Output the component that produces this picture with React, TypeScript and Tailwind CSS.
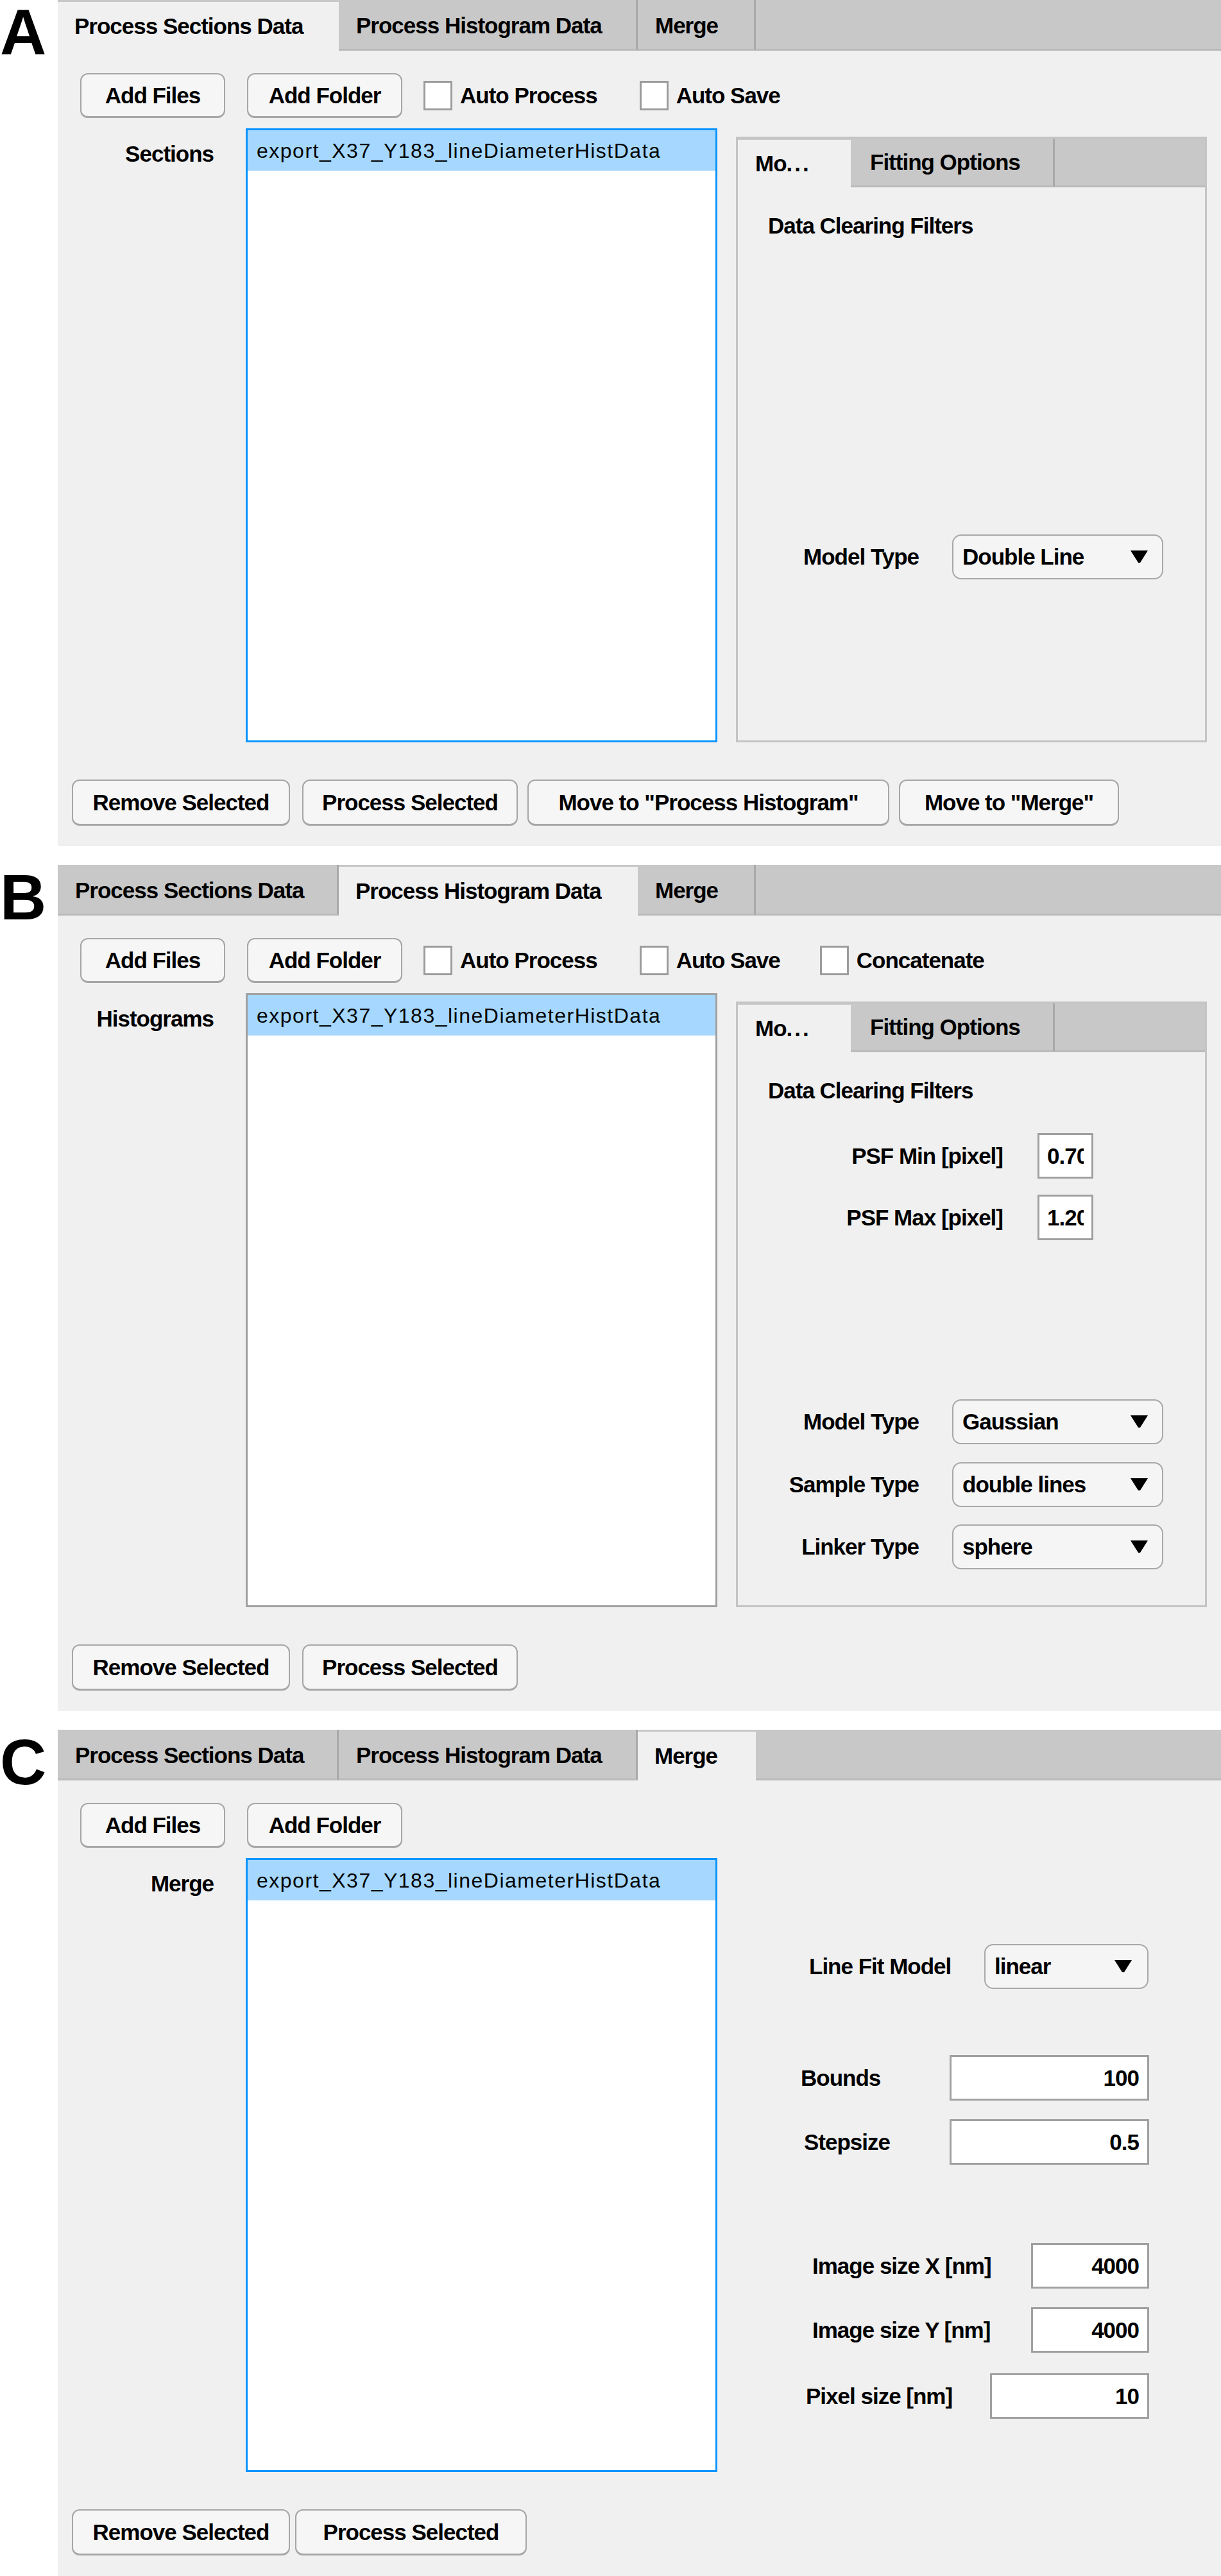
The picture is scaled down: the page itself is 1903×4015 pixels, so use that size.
import React from "react";

const B = "font-bold text-[35px] leading-[40px] tracking-[-1px] whitespace-nowrap";

const tabs = [
  { label: "Process Sections Data", w: "w-[438px]" },
  { label: "Process Histogram Data", w: "w-[466px]" },
  { label: "Merge", w: "w-[184px]" },
];

function TabBar({ active }: { active: number }) {
  return (
    <div className="flex h-[79px] bg-[#c8c8c8]">
      {tabs.map((t, i) =>
        i === active ? (
          <div key={t.label} className={`${t.w} mt-[3px] bg-[#f0f0f0] flex items-center pl-[26px] ${B}`}>
            {t.label}
          </div>
        ) : (
          <div
            key={t.label}
            className={`${t.w} flex items-center pl-[27px] pt-[3px] border-r-[3px] border-r-[#a9a9a9] border-b-[3px] border-b-[#bababa] ${B}`}
          >
            {t.label}
          </div>
        )
      )}
      <div className="flex-1 border-b-[3px] border-b-[#bababa]" />
    </div>
  );
}

function Btn({ label, w, h = "h-[70px]", className = "" }: { label: string; w: string; h?: string; className?: string }) {
  return (
    <div
      className={`${w} ${h} shrink-0 rounded-[12px] border-2 border-b-[3px] border-[#a6a6a6] bg-[#f6f6f6] flex items-center justify-center ${B} ${className}`}
    >
      {label}
    </div>
  );
}

function Check({ label, className = "" }: { label: string; className?: string }) {
  return (
    <div className={`flex items-center ${className}`}>
      <div className="w-[45px] h-[46px] bg-white border-[3px] border-[#9c9c9c]" />
      <span className={`ml-[12px] ${B}`}>{label}</span>
    </div>
  );
}

function ListBox({ blue }: { blue: boolean }) {
  return (
    <div className={`w-[735px] h-full shrink-0 bg-white border-[3px] ${blue ? "border-[#0a94ff]" : "border-[#a0a0a0]"}`}>
      <div className="h-[63px] bg-[#a6d8ff] flex items-center pl-[14px] text-[32px] tracking-[1.5px] whitespace-nowrap">
        export_X37_Y183_lineDiameterHistData
      </div>
    </div>
  );
}

function Arrow() {
  return (
    <svg width="27" height="20" viewBox="0 0 27 20">
      <path d="M0 0H27L15 19H12Z" fill="#000" />
    </svg>
  );
}

function Dropdown({ value, w, pr = "pr-[22px]" }: { value: string; w: string; pr?: string }) {
  return (
    <div
      className={`${w} h-[70px] shrink-0 rounded-[14px] border-2 border-[#a8a8a8] bg-[#f5f5f5] flex items-center justify-between pl-[14px] ${pr} ${B}`}
    >
      <span>{value}</span>
      <Arrow />
    </div>
  );
}

function NumBox({ value, w, left = false }: { value: string; w: string; left?: boolean }) {
  return (
    <div
      className={`${w} h-[71px] shrink-0 bg-white border-[3px] border-[#a0a0a0] flex items-center ${left ? "pl-[12px] pr-[12px]" : "justify-end pr-[13px]"} ${B}`}
    >
      <div className="overflow-hidden">{value}</div>
    </div>
  );
}

function SubPanel({ children }: { children: React.ReactNode }) {
  return (
    <div className="ml-[29px] mt-[13px] w-[734px] h-[944px] shrink-0 border-[3px] border-[#c4c4c4] bg-[#f0f0f0] flex flex-col">
      <div className="flex h-[76px] bg-[#c8c8c8]">
        <div className={`w-[176px] mt-[2px] bg-[#f0f0f0] flex items-center pl-[27px] ${B}`}>
          Mo<span className="tracking-[3px]">...</span>
        </div>
        <div className={`w-[318px] flex items-center pl-[30px] border-r-[3px] border-r-[#a9a9a9] border-b-[3px] border-b-[#bababa] ${B}`}>
          Fitting Options
        </div>
        <div className="flex-1 border-b-[3px] border-b-[#bababa]" />
      </div>
      <div className={`mt-[40px] pl-[47px] ${B}`}>Data Clearing Filters</div>
      {children}
    </div>
  );
}

function LabelRow({ label, lw, className = "", children }: { label: string; lw: string; className?: string; children: React.ReactNode }) {
  return (
    <div className={`flex items-center ${className}`}>
      <div className={`${lw} shrink-0 text-right ${B}`}>{label}</div>
      {children}
    </div>
  );
}

function Panel({
  letter,
  active,
  label,
  blue,
  checks,
  right,
  bottom,
}: {
  letter: string;
  active: number;
  label: string;
  blue: boolean;
  checks: string[];
  right: React.ReactNode;
  bottom: React.ReactNode;
}) {
  return (
    <div className="flex">
      <div className="w-[90px] shrink-0 font-bold text-[100px] leading-[100px]">{letter}</div>
      <div className="flex-1 h-[1319px] bg-[#f0f0f0] flex flex-col">
        <TabBar active={active} />
        <div className="flex items-center mt-[35px] pl-[35px] h-[70px]">
          <Btn label="Add Files" w="w-[226px]" />
          <Btn label="Add Folder" w="w-[242px]" className="ml-[34px]" />
          {checks.map((c, i) => (
            <Check key={c} label={c} className={i === 0 ? "ml-[33px]" : i === 1 ? "ml-[66px]" : "ml-[62px]"} />
          ))}
        </div>
        <div className="flex mt-[16px] h-[957px]">
          <div className={`w-[293px] shrink-0 text-right pr-[50px] pt-[20px] ${B}`}>{label}</div>
          <ListBox blue={blue} />
          {right}
        </div>
        <div className="flex mt-[58px] pl-[22px]">{bottom}</div>
      </div>
    </div>
  );
}

export default function App() {
  return (
    <div className="w-[1903px] bg-white text-black font-['Liberation_Sans',Arial,sans-serif]">
      <Panel
        letter="A"
        active={0}
        label="Sections"
        blue
        checks={["Auto Process", "Auto Save"]}
        right={
          <SubPanel>
            <LabelRow label="Model Type" lw="w-[282px]" className="mt-[461px]">
              <div className="ml-[52px]">
                <Dropdown value="Double Line" w="w-[329px]" />
              </div>
            </LabelRow>
          </SubPanel>
        }
        bottom={
          <>
            <Btn label="Remove Selected" w="w-[340px]" h="h-[72px]" />
            <Btn label="Process Selected" w="w-[336px]" h="h-[72px]" className="ml-[19px]" />
            <Btn label={'Move to "Process Histogram"'} w="w-[564px]" h="h-[72px]" className="ml-[15px]" />
            <Btn label={'Move to "Merge"'} w="w-[343px]" h="h-[72px]" className="ml-[15px]" />
          </>
        }
      />
      <div className="h-[29px]" />
      <Panel
        letter="B"
        active={1}
        label="Histograms"
        blue={false}
        checks={["Auto Process", "Auto Save", "Concatenate"]}
        right={
          <SubPanel>
            <LabelRow label="PSF Min [pixel]" lw="w-[413px]" className="mt-[46px]">
              <div className="ml-[54px]">
                <NumBox value="0.70" w="w-[87px]" left />
              </div>
            </LabelRow>
            <LabelRow label="PSF Max [pixel]" lw="w-[413px]" className="mt-[25px]">
              <div className="ml-[54px]">
                <NumBox value="1.20" w="w-[87px]" left />
              </div>
            </LabelRow>
            <LabelRow label="Model Type" lw="w-[282px]" className="mt-[248px]">
              <div className="ml-[52px]">
                <Dropdown value="Gaussian" w="w-[329px]" />
              </div>
            </LabelRow>
            <LabelRow label="Sample Type" lw="w-[282px]" className="mt-[28px]">
              <div className="ml-[52px]">
                <Dropdown value="double lines" w="w-[329px]" />
              </div>
            </LabelRow>
            <LabelRow label="Linker Type" lw="w-[282px]" className="mt-[27px]">
              <div className="ml-[52px]">
                <Dropdown value="sphere" w="w-[329px]" />
              </div>
            </LabelRow>
          </SubPanel>
        }
        bottom={
          <>
            <Btn label="Remove Selected" w="w-[340px]" h="h-[72px]" />
            <Btn label="Process Selected" w="w-[336px]" h="h-[72px]" className="ml-[19px]" />
          </>
        }
      />
      <div className="h-[29px]" />
      <Panel
        letter="C"
        active={2}
        label="Merge"
        blue
        checks={[]}
        right={
          <div className="flex flex-col">
            <div className="flex items-center mt-[134px] ml-[143px]">
              <div className={`w-[273px] shrink-0 ${B}`}>Line Fit Model</div>
              <Dropdown value="linear" w="w-[256px]" pr="pr-[24px]" />
            </div>
            <div className="flex items-center mt-[103px] ml-[130px]">
              <div className={`w-[232px] shrink-0 ${B}`}>Bounds</div>
              <NumBox value="100" w="w-[311px]" />
            </div>
            <div className="flex items-center mt-[29px] ml-[135px]">
              <div className={`w-[227px] shrink-0 ${B}`}>Stepsize</div>
              <NumBox value="0.5" w="w-[311px]" />
            </div>
            <div className="flex items-center mt-[122px] ml-[148px]">
              <div className={`w-[341px] shrink-0 ${B}`}>Image size X [nm]</div>
              <NumBox value="4000" w="w-[184px]" />
            </div>
            <div className="flex items-center mt-[29px] ml-[148px]">
              <div className={`w-[341px] shrink-0 ${B}`}>Image size Y [nm]</div>
              <NumBox value="4000" w="w-[184px]" />
            </div>
            <div className="flex items-center mt-[32px] ml-[138px]">
              <div className={`w-[287px] shrink-0 ${B}`}>Pixel size [nm]</div>
              <NumBox value="10" w="w-[248px]" />
            </div>
          </div>
        }
        bottom={
          <>
            <Btn label="Remove Selected" w="w-[340px]" h="h-[72px]" />
            <Btn label="Process Selected" w="w-[361px]" h="h-[72px]" className="ml-[8px]" />
          </>
        }
      />
    </div>
  );
}
